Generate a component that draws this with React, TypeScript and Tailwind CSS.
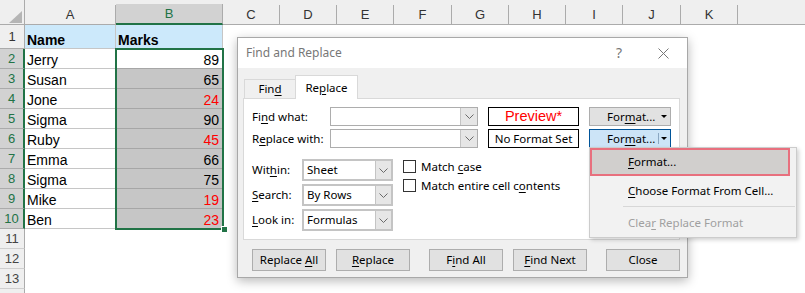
import React from "react";

const U = ({ children }: { children: React.ReactNode }) => (
  <span className="underline underline-offset-[2px]">{children}</span>
);

function Chevron() {
  return (
    <svg width="9" height="5" viewBox="0 0 9 5">
      <path d="M0.5 0.5 L4.5 4.5 L8.5 0.5" fill="none" stroke="#6a6a6a" strokeWidth="1" />
    </svg>
  );
}

function Tri() {
  return (
    <svg width="6" height="3" viewBox="0 0 6 3">
      <path d="M0 0 H6 L3 3 Z" fill="#000" />
    </svg>
  );
}

const data: [string, number, boolean][] = [
  ["Jerry", 89, false],
  ["Susan", 65, false],
  ["Jone", 24, true],
  ["Sigma", 90, false],
  ["Ruby", 45, true],
  ["Emma", 66, false],
  ["Sigma", 75, false],
  ["Mike", 19, true],
  ["Ben", 23, true],
];

const otherCols: [string, string][] = [
  ["C", "w-[57px]"],
  ["D", "w-[57px]"],
  ["E", "w-[57px]"],
  ["F", "w-[58px]"],
  ["G", "w-[57px]"],
  ["H", "w-[57px]"],
  ["I", "w-[57px]"],
  ["J", "w-[58px]"],
  ["K", "w-[57px]"],
];

function Sheet() {
  return (
    <div className="flex flex-col font-['Liberation_Sans',Arial,sans-serif]">
      {/* column header row */}
      <div className="flex h-[25px] bg-[#efefef] text-[13px] text-[#333]">
        <div className="w-[25px] h-full border-r border-b border-[#ababab] flex items-end justify-end pr-[2px] pb-[1px]">
          <svg width="13" height="12" viewBox="0 0 13 12">
            <path d="M13 0 V12 H0 Z" fill="#b5b5b5" />
          </svg>
        </div>
        <div className="w-[91px] h-full flex flex-col">
          <div className="h-[6px]" />
          <div className="flex-1 border-r border-b border-[#ababab] flex items-center justify-center">A</div>
        </div>
        <div className="w-[107px] h-full flex flex-col">
          <div className="h-[6px]" />
          <div className="flex-1 bg-[#d2d2d2] border-r border-r-[#ababab] border-b-2 border-b-[#217346] text-[#217346] flex items-center justify-center">
            B
          </div>
        </div>
        {otherCols.map(([l, w]) => (
          <div key={l} className={`${w} h-full flex flex-col`}>
            <div className="h-[6px]" />
            <div className="flex-1 border-r border-b border-[#ababab] flex items-center justify-center">{l}</div>
          </div>
        ))}
        <div className="flex-1 h-full flex flex-col">
          <div className="h-[6px]" />
          <div className="flex-1 border-b border-[#ababab]" />
        </div>
      </div>

      {/* row 1 */}
      <div className="flex h-[24px]">
        <div className="w-[25px] bg-[#efefef] border-r border-b border-[#ababab] flex items-center justify-center text-[13px] text-[#333]">
          1
        </div>
        <div className="w-[91px] bg-[#cce9fb] border-r border-b border-[#c6c6c6] flex items-end pl-[2px] text-[14px] leading-[16px] font-bold text-black">
          Name
        </div>
        <div className="w-[107px] bg-[#cce9fb] border-r border-b border-[#c6c6c6] flex items-end pl-[2px] text-[14px] leading-[16px] font-bold text-black">
          Marks
        </div>
      </div>

      {data.map(([name, mark, red], i) => (
        <div key={i} className="flex h-[20px]">
          <div className="w-[25px] bg-[#d2d2d2] border-r-2 border-r-[#217346] border-b border-b-[#ababab] flex items-center justify-center text-[13px] text-[#217346]">
            {i + 2}
          </div>
          <div className="w-[91px] bg-white border-r border-b border-[#c6c6c6] flex items-end pl-[2px] text-[14px] leading-[16px] text-black">
            {name}
          </div>
          <div
            className={`w-[107px] border-r border-b border-[#a6a6a6] flex items-end justify-end pr-[3px] text-[14px] leading-[16px] ${
              i === 0 ? "bg-white" : "bg-[#c6c6c6]"
            } ${red ? "text-[#ff0000]" : "text-black"}`}
          >
            {mark}
          </div>
        </div>
      ))}

      {[11, 12, 13].map((n) => (
        <div key={n} className="flex h-[20px]">
          <div className="w-[25px] bg-[#efefef] border-r border-b border-r-[#ababab] border-b-[#cfcfcf] flex items-center justify-center text-[13px] text-[#444]">
            {n}
          </div>
        </div>
      ))}
      <div className="flex h-[20px]">
        <div className="w-[25px] bg-[#efefef] border-r border-[#ababab]" />
      </div>
    </div>
  );
}

function Btn({ children, w = "w-[74px]", cls = "" }: { children: React.ReactNode; w?: string; cls?: string }) {
  return (
    <div className={`${w} h-[22px] bg-[#e1e1e1] border border-[#adadad] flex items-center justify-center ${cls}`}>
      <span className="whitespace-pre">{children}</span>
    </div>
  );
}

function Combo({ text, w }: { text?: string; w: string }) {
  return (
    <div className={`${w} h-[22px] border-2 border-[#c4c4c4] bg-white flex`}>
      <div className="flex-1 flex items-center pl-[3px]">{text}</div>
      <div className="w-[16px] bg-[#e6e6e6] border-l border-[#c4c4c4] flex items-center justify-center">
        <Chevron />
      </div>
    </div>
  );
}

function Input() {
  return (
    <div className="w-[148px] h-[19px] border border-[#adadad] bg-white flex">
      <div className="flex-1" />
      <div className="w-[17px] bg-[#e6e6e6] border-l border-[#c4c4c4] flex items-center justify-center">
        <Chevron />
      </div>
    </div>
  );
}

function Dialog() {
  return (
    <div className="absolute left-[237px] top-[37px] w-[451px] h-[241px] border border-[#a8a8a8] bg-[#f0f0f0] shadow-[0_3px_10px_rgba(0,0,0,0.28)] flex flex-col font-['Noto_Sans',sans-serif] text-[11.5px] text-black">
      <div className="h-[30px] bg-white flex items-center pl-[8px] text-[#777]">
        <span className="text-[12px]">Find and Replace</span>
        <span className="ml-auto text-[14px] leading-none">?</span>
        <svg className="ml-[36px] mr-[18px]" width="11" height="11" viewBox="0 0 11 11">
          <path d="M0.5 0.5 L10.5 10.5 M10.5 0.5 L0.5 10.5" stroke="#777" strokeWidth="1" />
        </svg>
      </div>

      <div className="flex-1 flex flex-col px-[5px] pt-[7px]">
        <div className="flex items-end h-[23px] pl-[1px]">
          <div className="w-[51px] h-[19px] border-l border-t border-[#d9d9d9] flex items-center justify-center">
            Fin<U>d</U>
          </div>
          <div className="w-[63px] h-[24px] -mb-[1px] relative z-[1] bg-white border border-b-0 border-[#d9d9d9] flex items-center justify-center">
            Re<U>p</U>lace
          </div>
        </div>

        <div className="w-[437px] h-[142px] bg-white border border-[#d9d9d9] flex flex-col pl-[8px] pt-[8px]">
          <div className="flex items-center h-[19px]">
            <div className="w-[78px]">
              Fi<U>n</U>d what:
            </div>
            <Input />
            <div className="ml-[10px] w-[91px] h-[19px] border border-black flex items-center justify-center text-[#ff0000] text-[14.5px] font-['Liberation_Sans',Arial,sans-serif]">
              Preview*
            </div>
            <div className="ml-[10px] w-[82px] h-[19px] bg-[#e1e1e1] border border-[#adadad] flex items-center pl-[17px] pr-[3px]">
              <span>
                For<U>m</U>at...
              </span>
              <span className="ml-auto flex">
                <Tri />
              </span>
            </div>
          </div>
          <div className="flex items-center h-[19px] mt-[3px]">
            <div className="w-[78px]">
              R<U>e</U>place with:
            </div>
            <Input />
            <div className="ml-[10px] w-[91px] h-[19px] border border-black flex items-center justify-center">
              No Format Set
            </div>
            <div className="ml-[10px] w-[82px] h-[19px] bg-[#cce4f7] border border-[#005499] flex items-center pl-[17px] pr-[3px]">
              <span>
                For<U>m</U>at...
              </span>
              <span className="ml-auto w-[1px] h-[11px] bg-[#8aa7c2] mr-[2px]" />
              <span className="flex">
                <Tri />
              </span>
            </div>
          </div>

          <div className="flex mt-[11px]">
            <div className="flex flex-col gap-[3px]">
              <div className="flex items-center">
                <div className="w-[50px]">
                  Wit<U>h</U>in:
                </div>
                <Combo text="Sheet" w="w-[91px]" />
              </div>
              <div className="flex items-center">
                <div className="w-[50px]">
                  <U>S</U>earch:
                </div>
                <Combo text="By Rows" w="w-[91px]" />
              </div>
              <div className="flex items-center">
                <div className="w-[50px]">
                  <U>L</U>ook in:
                </div>
                <Combo text="Formulas" w="w-[91px]" />
              </div>
            </div>
            <div className="ml-[10px] flex flex-col gap-[6px] pt-[1px]">
              <div className="flex items-center h-[13px]">
                <div className="w-[13px] h-[13px] border border-[#333] bg-white" />
                <span className="ml-[5px]">
                  Match <U>c</U>ase
                </span>
              </div>
              <div className="flex items-center h-[13px]">
                <div className="w-[13px] h-[13px] border border-[#333] bg-white" />
                <span className="ml-[5px]">
                  Match entire cell c<U>o</U>ntents
                </span>
              </div>
            </div>
          </div>
        </div>

        <div className="flex mt-[9px] ml-[9px]">
          <Btn>
            {"Replace "}
            <U>A</U>ll
          </Btn>
          <Btn cls="ml-[10px]">
            <U>R</U>eplace
          </Btn>
          <Btn cls="ml-[19px]">
            F<U>i</U>nd All
          </Btn>
          <Btn cls="ml-[10px]">
            <U>F</U>ind Next
          </Btn>
          <Btn cls="ml-[19px]">Close</Btn>
        </div>
      </div>
    </div>
  );
}

function Menu() {
  return (
    <div className="absolute left-[589px] top-[147px] w-[208px] h-[91px] bg-[#f2f2f2] border border-[#cccccc] shadow-[2px_2px_4px_rgba(0,0,0,0.18)] flex flex-col font-['Noto_Sans',sans-serif] text-[11.5px] text-black">
      <div className="h-[28px] mr-[6px] border-2 border-[#e8707e] bg-[#d1cfcd] flex items-center pl-[36px]">
        <span>
          <U>F</U>ormat...
        </span>
      </div>
      <div className="h-[29px] flex items-center pl-[38px]">
        <span>
          <U>C</U>hoose Format From Cell...
        </span>
      </div>
      <div className="h-[1px] my-[1px] ml-[33px] mr-[1px] bg-[#d7d7d7]" />
      <div className="h-[29px] flex items-center pl-[38px] text-[#a0a0a0]">
        <span>
          Clea<U>r</U> Replace Format
        </span>
      </div>
    </div>
  );
}

export default function App() {
  return (
    <div className="relative w-[805px] h-[293px] overflow-hidden bg-white">
      <Sheet />
      {/* selection outline B2:B10 */}
      <div className="absolute left-[115px] top-[48px] w-[109px] h-[182px] border-2 border-[#217346]" />
      <div className="absolute left-[221px] top-[226px] w-[6px] h-[6px] bg-[#217346] border-l border-t border-white" />
      <Dialog />
      <Menu />
    </div>
  );
}
